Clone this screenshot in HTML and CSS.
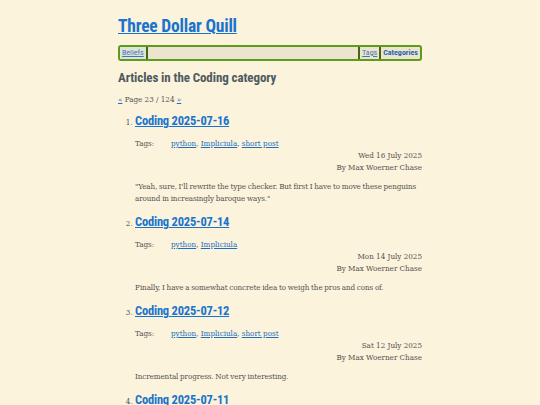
FILE: index.html
```html
<!DOCTYPE html>
<html>
<head>
<meta charset="utf-8">
<link rel="stylesheet" href="styles.css">
</head>
<body>
<div class="page">
  <header class="site-head">
    <h1 class="site-title"><a href="#">Three Dollar Quill</a></h1>
    <nav class="nav">
      <a class="nav-item first" href="#">Beliefs</a>
      <span class="nav-spacer"></span>
      <a class="nav-item sep" href="#">Tags</a>
      <a class="nav-item current" href="#">Categories</a>
    </nav>
  </header>
  <main>
    <h2 class="cat-head">Articles in the Coding category</h2>
    <p class="pager"><a href="#">«</a> Page 23 / 124 <a href="#">»</a></p>
    <ol class="articles" start="1">
      <li class="article">
        <h3 class="a-title"><a href="#">Coding 2025-07-16</a></h3>
        <div class="tags"><span class="tags-label">Tags:</span><span class="tags-list"><a href="#">python</a>, <a href="#">Impliciula</a>, <a href="#">short post</a></span></div>
        <div class="meta"><div>Wed 16 July 2025</div><div>By Max Woerner Chase</div></div>
        <p class="summary">"Yeah, sure, I'll rewrite the type checker. But first I have to move these penguins around in increasingly baroque ways."</p>
      </li>
      <li class="article">
        <h3 class="a-title"><a href="#">Coding 2025-07-14</a></h3>
        <div class="tags"><span class="tags-label">Tags:</span><span class="tags-list"><a href="#">python</a>, <a href="#">Impliciula</a></span></div>
        <div class="meta"><div>Mon 14 July 2025</div><div>By Max Woerner Chase</div></div>
        <p class="summary">Finally, I have a somewhat concrete idea to weigh the pros and cons of.</p>
      </li>
      <li class="article">
        <h3 class="a-title"><a href="#">Coding 2025-07-12</a></h3>
        <div class="tags"><span class="tags-label">Tags:</span><span class="tags-list"><a href="#">python</a>, <a href="#">Impliciula</a>, <a href="#">short post</a></span></div>
        <div class="meta"><div>Sat 12 July 2025</div><div>By Max Woerner Chase</div></div>
        <p class="summary">Incremental progress. Not very interesting.</p>
      </li>
      <li class="article">
        <h3 class="a-title"><a href="#">Coding 2025-07-11</a></h3>
        <div class="tags"><span class="tags-label">Tags:</span><span class="tags-list"><a href="#">python</a>, <a href="#">Impliciula</a></span></div>
        <div class="meta"><div>Fri 11 July 2025</div><div>By Max Woerner Chase</div></div>
        <p class="summary">More progress.</p>
      </li>
    </ol>
  </main>
</div>
</body>
</html>
```
FILE: styles.css
```css
html, body {
  margin: 0;
  padding: 0;
  background: #fbf3dc;
}
body {
  font-family: "DejaVu Serif", serif;
  font-stretch: condensed;
  color: #555250;
  font-size: 8px;
}
.page {
  width: 304px;
  margin: 0 auto;
  padding-top: 14px;
}
a { color: #1c6fc0; }
.site-title {
  margin: 0;
  font-family: Roboto, sans-serif;
  font-weight: 700;
  font-size: 17.5px;
  letter-spacing: -0.2px;
  line-height: 24px;
}
.site-title a { color: #1a73cc; }
.nav {
  display: flex;
  margin-top: 7px;
  border: 2px solid #5e9a1c;
  border-radius: 3px;
  background: #ece4cf;
  font-family: Roboto, sans-serif;
  font-size: 8px;
  line-height: 12px;
}
.nav-item {
  padding: 0 2px;
  color: #3f78b8;
}
.nav-item.first {
  border-right: 2px solid #3e6b0e;
  background: #dfe3d8;
}
.nav-spacer { flex: 1; }
.nav-item.sep {
  border-left: 2px solid #3e6b0e;
  border-right: 2px solid #3e6b0e;
}
.nav-item.current {
  font-weight: 700;
  color: #2866a8;
  text-decoration: none;
}
.cat-head {
  margin: 9px 0 0;
  font-family: Roboto, sans-serif;
  font-size: 13px;
  letter-spacing: -0.1px;
  line-height: 16px;
  color: #4d5a60;
}
.pager {
  margin: 8px 0 0;
  font-size: 8px;
  line-height: 12px;
}
.articles {
  margin: 6px 0 0;
  padding-left: 17px;
}
.article { font-size: 8px; }
.a-title {
  margin: 0;
  font-family: Roboto, sans-serif;
  font-size: 12.5px;
  letter-spacing: -0.2px;
  line-height: 18px;
}
.a-title a { color: #1a73cc; }
.tags {
  display: flex;
  margin-top: 8px;
  line-height: 12px;
}
.tags-label { width: 36px; }
.meta {
  text-align: right;
  line-height: 12px;
}
.summary {
  margin: 7px 0 0;
  line-height: 12px;
  padding-bottom: 8px;
  letter-spacing: -0.1px;
  word-spacing: -0.4px;
}
```
